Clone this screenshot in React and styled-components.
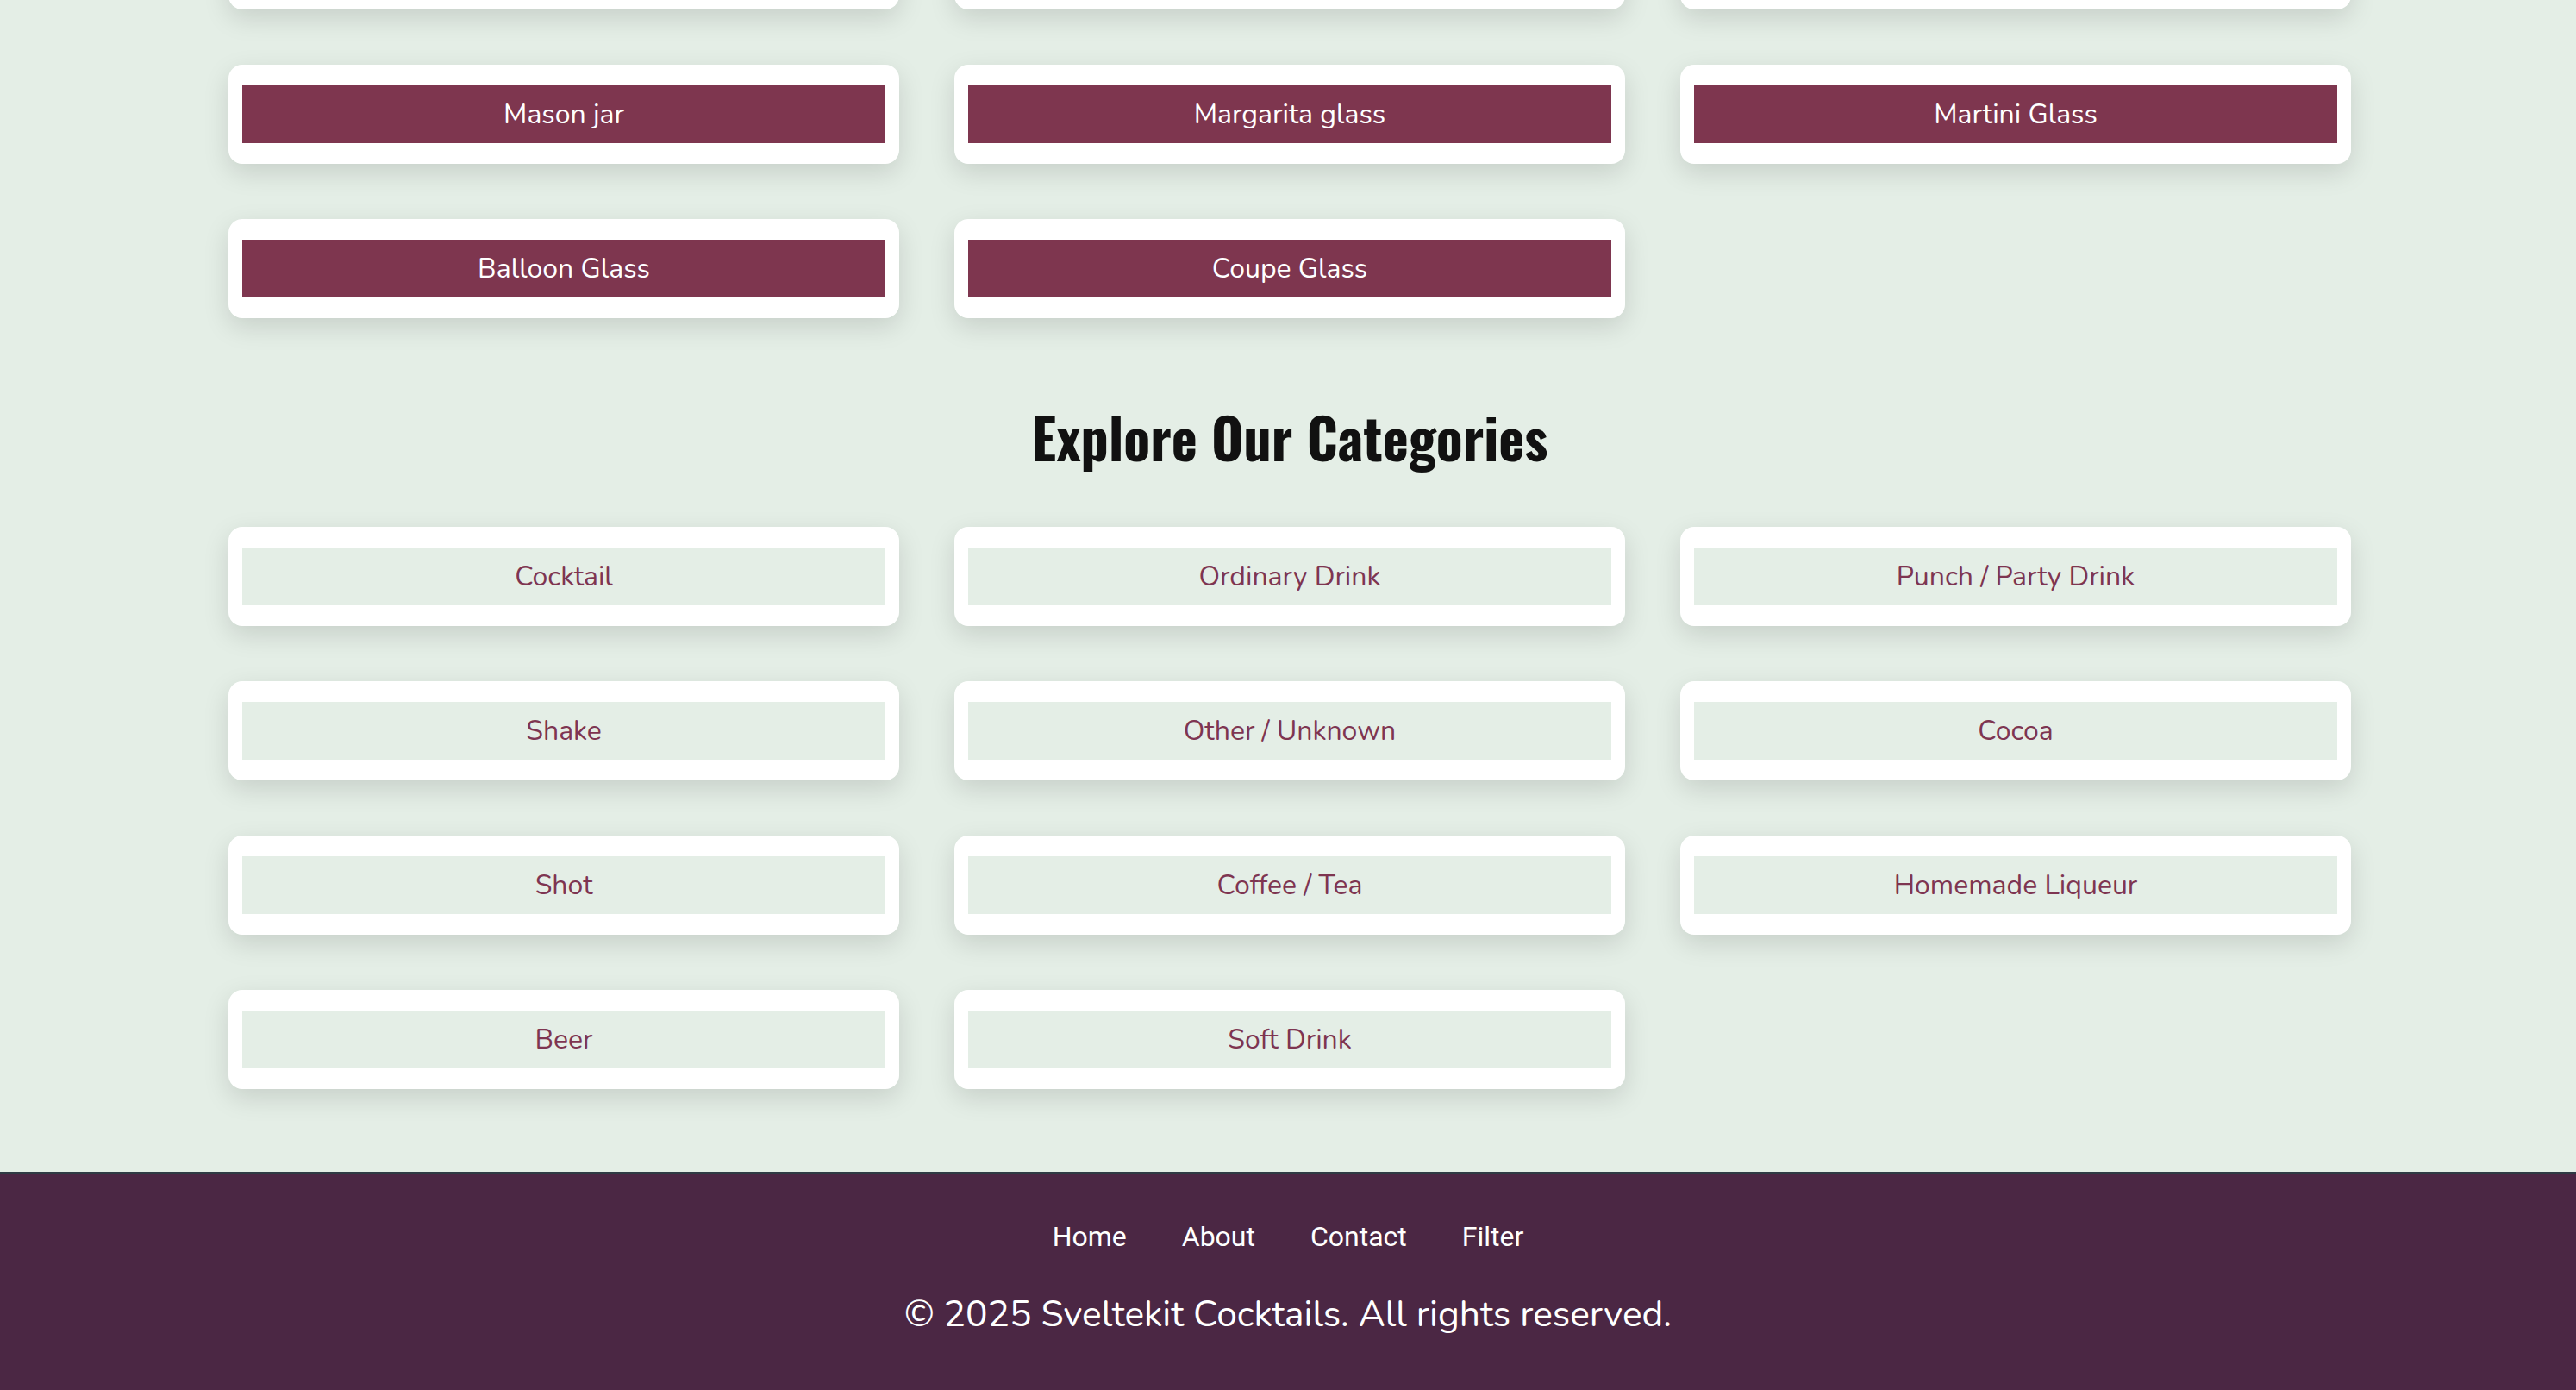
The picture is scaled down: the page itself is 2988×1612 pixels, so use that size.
import React from 'react';
import styled, { createGlobalStyle } from 'styled-components';

const GlobalStyle = createGlobalStyle`
  html, body {
    margin: 0;
    padding: 0;
    background: #e4eee6;
    font-family: "Nunito", "Lato", "Noto Sans", sans-serif;
  }
`

const Page = styled.div`
  height: 100vh;
  overflow: hidden;
  display: flex;
  flex-direction: column;
  justify-content: flex-end;
`
const Main = styled.main`
  padding: 0 0 96px 4px;
`
const Section = styled.section`
  max-width: 2462px;
  margin: 0 auto;
`
const Title = styled.h2`
  margin: 0;
  padding: ${props => props.$first ? '0' : '105px'} 0 73px;
  text-align: center;
  font-family: "Oswald", "Liberation Sans Narrow", "DejaVu Sans Condensed", sans-serif;
  font-weight: 700;
  font-size: 64px;
  line-height: 1;
  color: #111;
`
const Grid = styled.div`
  display: grid;
  grid-template-columns: repeat(3, 1fr);
  gap: 64px;
`
const Card = styled.div`
  background: #fff;
  border-radius: 16px;
  padding: 24px 16px;
  box-shadow: 0 10px 30px rgba(0, 0, 0, 0.13);
`
const Tile = styled.a`
  display: block;
  padding: 16px 0;
  text-align: center;
  font-size: 32px;
  line-height: 35px;
  text-decoration: none;
  background: ${props => props.$filled ? '#7e364f' : '#e4eee6'};
  color: ${props => props.$filled ? '#fff' : '#7e3551'};
`
const Footer = styled.footer`
  background: #4b2744;
  border-top: 3px solid #2f3b44;
  padding: 54px 0 62px;
  text-align: center;
  color: #fff;
`
const Nav = styled.nav`
  display: flex;
  justify-content: center;
  gap: 64px;
  margin-bottom: 46px;
`
const NavLink = styled.a`
  font-family: Roboto, "Liberation Sans", sans-serif;
  font-size: 32px;
  line-height: 1.172;
  color: #fff;
  text-decoration: none;
`
const Copy = styled.p`
  margin: 0;
  font-size: 42.5px;
  line-height: 1.2;
`

const glasses = [
  'Highball glass', 'Cocktail glass', 'Old-fashioned glass',
  'Whiskey Glass', 'Collins glass', 'Pousse cafe glass',
  'Champagne flute', 'Whiskey sour glass', 'Cordial glass',
  'Brandy snifter', 'White wine glass', 'Nick and Nora Glass',
  'Hurricane glass', 'Coffee mug', 'Shot glass',
  'Jar', 'Irish coffee cup', 'Punch bowl',
  'Pitcher', 'Pint glass', 'Copper Mug',
  'Wine Glass', 'Beer mug', 'Margarita/Coupette glass',
  'Beer pilsner', 'Beer Glass', 'Parfait glass',
  'Mason jar', 'Margarita glass', 'Martini Glass',
  'Balloon Glass', 'Coupe Glass',
];

const categories = [
  'Cocktail', 'Ordinary Drink', 'Punch / Party Drink',
  'Shake', 'Other / Unknown', 'Cocoa',
  'Shot', 'Coffee / Tea', 'Homemade Liqueur',
  'Beer', 'Soft Drink',
];

const links = ['Home', 'About', 'Contact', 'Filter'];

const App = () => {
  return (
    <Page>
      <GlobalStyle />
      <Main>
        <Section>
          <Title $first>Explore Our Glasses</Title>
          <Grid>
            {glasses.map(glass => (
              <Card key={glass}>
                <Tile href="#" $filled>{glass}</Tile>
              </Card>
            ))}
          </Grid>
        </Section>
        <Section>
          <Title>Explore Our Categories</Title>
          <Grid>
            {categories.map(cat => (
              <Card key={cat}>
                <Tile href="#">{cat}</Tile>
              </Card>
            ))}
          </Grid>
        </Section>
      </Main>
      <Footer>
        <Nav>
          {links.map(link => (
            <NavLink key={link} href="#">{link}</NavLink>
          ))}
        </Nav>
        <Copy>© 2025 Sveltekit Cocktails. All rights reserved.</Copy>
      </Footer>
    </Page>
  );
};

export default App;
